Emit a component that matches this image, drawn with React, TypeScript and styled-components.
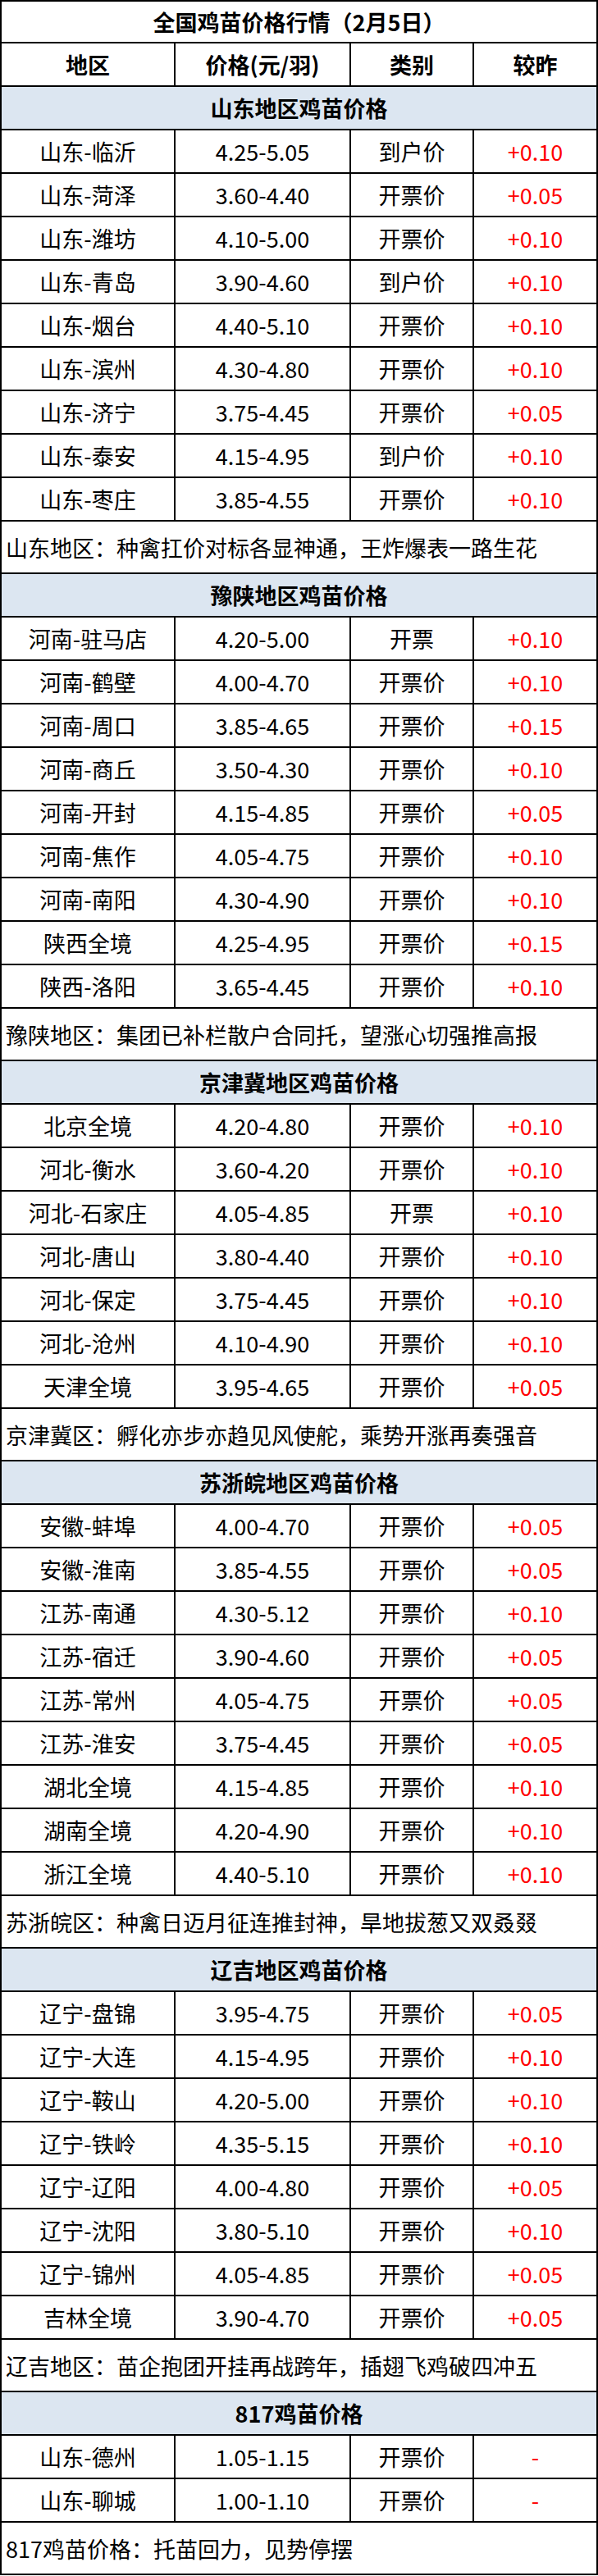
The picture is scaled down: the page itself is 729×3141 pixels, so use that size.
import React from 'react';
import styled, { createGlobalStyle } from 'styled-components';

type PriceRow = {
	area: string,
	price: string,
	kind: string,
	change: string
}

type Section = {
	title: string,
	rows: PriceRow[],
	note: string
}

const GlobalStyle = createGlobalStyle`
	html, body {
		margin: 0;
		padding: 0;
		background: #ffffff;
	}
	body {
		font-family: "Noto Sans CJK SC", "Noto Sans", sans-serif;
		color: #000000;
	}
`;

const Sheet = styled.div`
	width: 729px;
	box-sizing: border-box;
	border: 2px solid #000;
	border-bottom: none;
	display: flex;
	flex-direction: column;
`;

const TitleRow = styled.div`
	height: 51px;
	box-sizing: border-box;
	border-bottom: 2px solid #000;
	display: flex;
	align-items: center;
	justify-content: center;
	font-size: 27px;
	font-weight: 700;
`;

const BandRow = styled(TitleRow)`
	height: 53px;
	background: #dce6f1;
`;

const GridRow = styled.div`
	height: 53px;
	box-sizing: border-box;
	border-bottom: 2px solid #000;
	display: grid;
	grid-template-columns: 212px 214px 150px 1fr;
`;

const Cell = styled.div<{ $bold?: boolean, $red?: boolean }>`
	display: flex;
	align-items: center;
	justify-content: center;
	border-right: 2px solid #000;
	font-size: 27px;
	font-weight: ${p => p.$bold ? 700 : 400};
	color: ${p => p.$red ? '#ff0000' : '#000'};
	white-space: nowrap;

	&:last-child {
		border-right: none;
	}
`;

const NoteRow = styled.div`
	height: 64px;
	box-sizing: border-box;
	border-bottom: 2px solid #000;
	display: flex;
	align-items: center;
	padding-left: 5px;
	font-size: 27px;
	white-space: nowrap;
`;

const sections: Section[] = [
	{
		title: '山东地区鸡苗价格',
		rows: [
			{ area: '山东-临沂', price: '4.25-5.05', kind: '到户价', change: '+0.10' },
			{ area: '山东-菏泽', price: '3.60-4.40', kind: '开票价', change: '+0.05' },
			{ area: '山东-潍坊', price: '4.10-5.00', kind: '开票价', change: '+0.10' },
			{ area: '山东-青岛', price: '3.90-4.60', kind: '到户价', change: '+0.10' },
			{ area: '山东-烟台', price: '4.40-5.10', kind: '开票价', change: '+0.10' },
			{ area: '山东-滨州', price: '4.30-4.80', kind: '开票价', change: '+0.10' },
			{ area: '山东-济宁', price: '3.75-4.45', kind: '开票价', change: '+0.05' },
			{ area: '山东-泰安', price: '4.15-4.95', kind: '到户价', change: '+0.10' },
			{ area: '山东-枣庄', price: '3.85-4.55', kind: '开票价', change: '+0.10' },
		],
		note: '山东地区：种禽扛价对标各显神通，王炸爆表一路生花'
	},
	{
		title: '豫陕地区鸡苗价格',
		rows: [
			{ area: '河南-驻马店', price: '4.20-5.00', kind: '开票', change: '+0.10' },
			{ area: '河南-鹤壁', price: '4.00-4.70', kind: '开票价', change: '+0.10' },
			{ area: '河南-周口', price: '3.85-4.65', kind: '开票价', change: '+0.15' },
			{ area: '河南-商丘', price: '3.50-4.30', kind: '开票价', change: '+0.10' },
			{ area: '河南-开封', price: '4.15-4.85', kind: '开票价', change: '+0.05' },
			{ area: '河南-焦作', price: '4.05-4.75', kind: '开票价', change: '+0.10' },
			{ area: '河南-南阳', price: '4.30-4.90', kind: '开票价', change: '+0.10' },
			{ area: '陕西全境', price: '4.25-4.95', kind: '开票价', change: '+0.15' },
			{ area: '陕西-洛阳', price: '3.65-4.45', kind: '开票价', change: '+0.10' },
		],
		note: '豫陕地区：集团已补栏散户合同托，望涨心切强推高报'
	},
	{
		title: '京津冀地区鸡苗价格',
		rows: [
			{ area: '北京全境', price: '4.20-4.80', kind: '开票价', change: '+0.10' },
			{ area: '河北-衡水', price: '3.60-4.20', kind: '开票价', change: '+0.10' },
			{ area: '河北-石家庄', price: '4.05-4.85', kind: '开票', change: '+0.10' },
			{ area: '河北-唐山', price: '3.80-4.40', kind: '开票价', change: '+0.10' },
			{ area: '河北-保定', price: '3.75-4.45', kind: '开票价', change: '+0.10' },
			{ area: '河北-沧州', price: '4.10-4.90', kind: '开票价', change: '+0.10' },
			{ area: '天津全境', price: '3.95-4.65', kind: '开票价', change: '+0.05' },
		],
		note: '京津冀区：孵化亦步亦趋见风使舵，乘势开涨再奏强音'
	},
	{
		title: '苏浙皖地区鸡苗价格',
		rows: [
			{ area: '安徽-蚌埠', price: '4.00-4.70', kind: '开票价', change: '+0.05' },
			{ area: '安徽-淮南', price: '3.85-4.55', kind: '开票价', change: '+0.05' },
			{ area: '江苏-南通', price: '4.30-5.12', kind: '开票价', change: '+0.10' },
			{ area: '江苏-宿迁', price: '3.90-4.60', kind: '开票价', change: '+0.05' },
			{ area: '江苏-常州', price: '4.05-4.75', kind: '开票价', change: '+0.05' },
			{ area: '江苏-淮安', price: '3.75-4.45', kind: '开票价', change: '+0.05' },
			{ area: '湖北全境', price: '4.15-4.85', kind: '开票价', change: '+0.10' },
			{ area: '湖南全境', price: '4.20-4.90', kind: '开票价', change: '+0.10' },
			{ area: '浙江全境', price: '4.40-5.10', kind: '开票价', change: '+0.10' },
		],
		note: '苏浙皖区：种禽日迈月征连推封神，旱地拔葱又双叒叕'
	},
	{
		title: '辽吉地区鸡苗价格',
		rows: [
			{ area: '辽宁-盘锦', price: '3.95-4.75', kind: '开票价', change: '+0.05' },
			{ area: '辽宁-大连', price: '4.15-4.95', kind: '开票价', change: '+0.10' },
			{ area: '辽宁-鞍山', price: '4.20-5.00', kind: '开票价', change: '+0.10' },
			{ area: '辽宁-铁岭', price: '4.35-5.15', kind: '开票价', change: '+0.10' },
			{ area: '辽宁-辽阳', price: '4.00-4.80', kind: '开票价', change: '+0.05' },
			{ area: '辽宁-沈阳', price: '3.80-5.10', kind: '开票价', change: '+0.10' },
			{ area: '辽宁-锦州', price: '4.05-4.85', kind: '开票价', change: '+0.05' },
			{ area: '吉林全境', price: '3.90-4.70', kind: '开票价', change: '+0.05' },
		],
		note: '辽吉地区：苗企抱团开挂再战跨年，插翅飞鸡破四冲五'
	},
	{
		title: '817鸡苗价格',
		rows: [
			{ area: '山东-德州', price: '1.05-1.15', kind: '开票价', change: '-' },
			{ area: '山东-聊城', price: '1.00-1.10', kind: '开票价', change: '-' },
		],
		note: '817鸡苗价格：托苗回力，见势停摆'
	},
];

const PriceSection = ({ section }: { section: Section }) => (
	<>
		<BandRow>{section.title}</BandRow>
		{section.rows.map(r => (
			<GridRow key={r.area}>
				<Cell>{r.area}</Cell>
				<Cell>{r.price}</Cell>
				<Cell>{r.kind}</Cell>
				<Cell $red>{r.change}</Cell>
			</GridRow>
		))}
		<NoteRow>{section.note}</NoteRow>
	</>
);

export default function App() {
	return (
		<>
			<GlobalStyle />
			<Sheet>
				<TitleRow>全国鸡苗价格行情（2月5日）</TitleRow>
				<GridRow>
					<Cell $bold>地区</Cell>
					<Cell $bold>价格(元/羽)</Cell>
					<Cell $bold>类别</Cell>
					<Cell $bold>较昨</Cell>
				</GridRow>
				{sections.map(s => <PriceSection key={s.title} section={s} />)}
			</Sheet>
		</>
	);
}
